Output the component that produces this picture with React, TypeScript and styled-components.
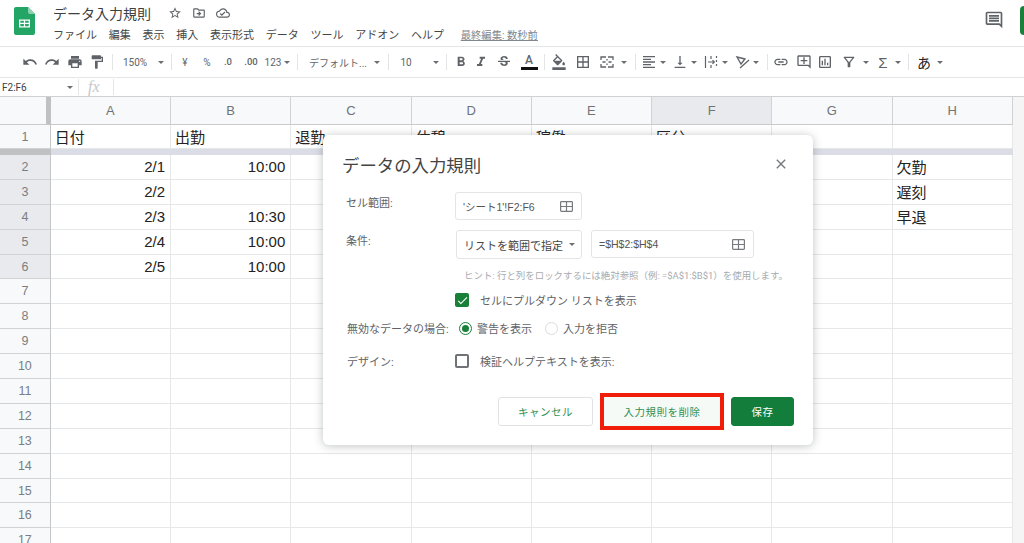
import React from "react";
import styled, { createGlobalStyle } from "styled-components";
import {
  MdUndo,
  MdRedo,
  MdPrint,
  MdFormatPaint,
  MdFormatBold,
  MdFormatItalic,
  MdStrikethroughS,
  MdFormatColorFill,
  MdBorderAll,
  MdFormatAlignLeft,
  MdVerticalAlignBottom,
  MdLink,
  MdOutlineAddComment,
  MdOutlineInsertChart,
  MdOutlineFilterAlt,
  MdOutlineComment,
  MdStarBorder,
  MdOutlineDriveFileMove,
  MdOutlineCloudDone,
  MdCheck,
  MdClose,
} from "react-icons/md";

const UI_FONT = `Roboto, "Noto Sans CJK JP", sans-serif`;
const CELL_FONT = `"Liberation Sans", "Noto Sans CJK JP", sans-serif`;

const GlobalStyle = createGlobalStyle`
  html, body {
    margin: 0;
    padding: 0;
    background: #fff;
    overflow: hidden;
  }
  body {
    font-family: ${UI_FONT};
  }
`;

const Page = styled.div`
  position: relative;
  width: 1024px;
  height: 543px;
  overflow: hidden;
  display: flex;
  flex-direction: column;
  background: #fff;
`;

const Header = styled.header`
  height: 46px;
  flex: none;
  display: flex;
  align-items: flex-start;
  border-bottom: 1px solid #e4e5e7;
  box-sizing: content-box;
`;

const LogoBox = styled.div`
  width: 53px;
  flex: none;
  display: flex;
  justify-content: center;
  padding: 7px 5px 0 0;
  box-sizing: border-box;
`;

const TitleColumn = styled.div`
  display: flex;
  flex-direction: column;
  padding-top: 2px;
`;

const TitleRow = styled.div`
  display: flex;
  align-items: center;
  height: 21px;
`;

const DocTitle = styled.span`
  font-size: 14px;
  color: #3c4043;
  width: 110px;
`;

const TitleIcon = styled.span`
  width: 24px;
  display: flex;
  justify-content: center;
  color: #5f6368;
  font-size: 14px;
`;

const MenuBar = styled.nav`
  display: flex;
  align-items: center;
  gap: 11.75px;
  margin-top: 2px;
  height: 18px;
`;

const MenuItem = styled.span`
  font-size: 11px;
  color: #444746;
`;

const LastEdit = styled.span`
  font-size: 10.3px;
  color: #80868b;
  text-decoration: underline;
  margin-left: 5px;
`;

const HeaderRight = styled.div`
  margin-left: auto;
  display: flex;
  align-items: flex-start;
  gap: 16px;
  padding-top: 6px;
`;

const CommentButton = styled.span`
  display: flex;
  font-size: 20px;
  color: #5f6368;
  margin-top: 4px;
`;

const ShareStub = styled.span`
  width: 4px;
  height: 29px;
  background: #188038;
  border-radius: 4px 0 0 4px;
`;

const Toolbar = styled.div`
  height: 30px;
  flex: none;
  display: flex;
  align-items: center;
  border-bottom: 1px solid #e4e5e7;
`;

const Tool = styled.span<{ $gap: number; $w?: number; $size?: number }>`
  flex: none;
  margin-left: ${(p) => p.$gap}px;
  width: ${(p) => p.$w ?? 16}px;
  display: flex;
  align-items: center;
  justify-content: center;
  color: #5f6368;
  font-size: ${(p) => p.$size ?? 16}px;
  white-space: nowrap;
`;

const ToolText = styled(Tool)`
  font-size: 10px;
  color: #5f6368;
`;

const SigmaTool = styled(Tool)`
  font-family: "Liberation Sans", sans-serif;
  font-size: 15px;
`;

const ImeTool = styled(Tool)`
  font-size: 14px;
  color: #222;
`;

const Caret = styled.span<{ $gap: number }>`
  flex: none;
  margin-left: ${(p) => p.$gap}px;
  width: 8px;
  display: flex;
  justify-content: center;
  &::before {
    content: "";
    border-left: 3px solid transparent;
    border-right: 3px solid transparent;
    border-top: 3px solid #6b6f73;
  }
`;

const ToolSep = styled.span<{ $gap: number }>`
  flex: none;
  margin-left: ${(p) => p.$gap}px;
  width: 1px;
  height: 16px;
  background: #e4e5e7;
`;

const TextColorIcon = styled.span`
  width: 16px;
  display: flex;
  flex-direction: column;
  align-items: center;
  font-size: 12px;
  line-height: 12px;
  font-weight: 500;
  color: #5f6368;
  &::after {
    content: "";
    display: block;
    width: 17px;
    height: 3px;
    background: #111;
    margin-top: 1px;
  }
`;

const DecimalLabel = styled.span`
  font-size: 9.5px;
  font-weight: 500;
  position: relative;
  top: -1px;
`;

const FormulaBar = styled.div`
  height: 18px;
  flex: none;
  display: flex;
  align-items: center;
  border-bottom: 1px solid #cfd1d3;
`;

const NameBox = styled.span`
  width: 64px;
  padding-left: 2px;
  font-size: 10px;
  color: #3c4043;
`;

const FxLabel = styled.span`
  font-family: "Liberation Serif", serif;
  font-style: italic;
  font-size: 16px;
  color: #c6c8ca;
  margin-left: 9px;
  width: 25px;
`;

const Sheet = styled.div`
  flex: 1;
  display: flex;
  flex-direction: column;
  background: #f5f5f6;
`;

const SheetRow = styled.div<{ $height: number }>`
  display: grid;
  grid-template-columns: 50.75px repeat(8, 120.25px);
  height: ${(p) => p.$height}px;
  flex: none;
`;

const ColumnCorner = styled.div`
  background: #f8f9fa;
  border-bottom: 1px solid #c8cacc;
  border-right: 5px solid #bfc1c3;
`;

const ColumnHead = styled.div<{ $active?: boolean }>`
  display: flex;
  align-items: center;
  justify-content: center;
  font-family: ${CELL_FONT};
  font-size: 13px;
  color: #6f7377;
  background: ${(p) => (p.$active ? "#e8eaed" : "#f8f9fa")};
  border-right: 1px solid #d0d2d4;
  border-bottom: 1px solid #c8cacc;
  box-sizing: border-box;
`;

const RowHead = styled.div<{ $active?: boolean }>`
  display: flex;
  align-items: center;
  justify-content: center;
  font-family: ${CELL_FONT};
  font-size: 12.5px;
  color: #7a7e82;
  background: ${(p) => (p.$active ? "#e8eaed" : "#f8f9fa")};
  border-right: 1px solid #c4c6c8;
  border-bottom: 1px solid #d0d2d4;
  box-sizing: border-box;
`;

const Cell = styled.div<{ $right?: boolean }>`
  display: flex;
  align-items: center;
  justify-content: ${(p) => (p.$right ? "flex-end" : "flex-start")};
  padding: 0 ${(p) => (p.$right ? 5 : 4)}px 0 4px;
  font-family: ${CELL_FONT};
  font-size: 15px;
  color: #222;
  background: #fff;
  border-right: 1px solid #e6e7e8;
  border-bottom: 1px solid #e6e7e8;
  box-sizing: border-box;
  overflow: hidden;
  white-space: nowrap;
`;

const FreezeBar = styled.div`
  flex: none;
  height: 6px;
  display: grid;
  grid-template-columns: 50.75px 962px;
`;

const FreezeHead = styled.div`
  background: #bfc1c3;
`;

const FreezeBody = styled.div`
  background: #dadde5;
`;

const Dialog = styled.section`
  position: absolute;
  left: 323px;
  top: 135px;
  width: 490px;
  height: 310px;
  box-sizing: border-box;
  padding: 16px 19px 0;
  background: #fff;
  border-radius: 6px;
  box-shadow: 0 1px 10px rgba(60, 64, 67, 0.32);
  display: flex;
  flex-direction: column;
`;

const DialogHead = styled.div`
  display: flex;
  align-items: center;
  justify-content: space-between;
  height: 26px;
  margin-bottom: 15px;
`;

const DialogTitle = styled.h2`
  margin: 0;
  font-size: 17.4px;
  font-weight: 400;
  color: #444;
`;

const CloseIcon = styled.span`
  display: flex;
  font-size: 16px;
  color: #75787c;
  margin-right: 5px;
`;

const FormRow = styled.div<{ $mb: number }>`
  display: grid;
  grid-template-columns: 113px 1fr;
  margin-bottom: ${(p) => p.$mb}px;
  align-items: flex-start;
`;

const FieldLabel = styled.span<{ $top?: number; $nudge?: number }>`
  font-size: 11px;
  color: #5f6368;
  padding: ${(p) => p.$top ?? 2}px 0 0 ${(p) => p.$nudge ?? 4}px;
  white-space: nowrap;
`;

const Fields = styled.div`
  display: flex;
  align-items: flex-start;
  gap: 9px;
`;

const RangeInput = styled.div<{ $w: number; $h: number }>`
  width: ${(p) => p.$w}px;
  height: ${(p) => p.$h}px;
  box-sizing: border-box;
  border: 1px solid #e3e4e6;
  border-radius: 3px;
  display: flex;
  align-items: center;
  justify-content: space-between;
  padding: 0 8px 0 7px;
  font-family: ${CELL_FONT};
  font-size: 10.5px;
  color: #555;
`;

const SelectBox = styled.div`
  width: 126px;
  height: 29px;
  box-sizing: border-box;
  margin-left: 1px;
  border: 1px solid #e3e4e6;
  border-radius: 3px;
  display: flex;
  align-items: center;
  justify-content: space-between;
  padding: 0 5px 0 7px;
  font-size: 11px;
  color: #444;
  white-space: nowrap;
`;

const Hint = styled.div`
  margin: 9px 0 10px 122px;
  font-size: 9.45px;
  color: #a8abae;
  white-space: nowrap;
`;

const CheckRow = styled.div<{ $mb: number; $indent?: number }>`
  display: flex;
  align-items: center;
  gap: 11px;
  margin-left: ${(p) => p.$indent ?? 0}px;
  margin-bottom: ${(p) => p.$mb}px;
  font-size: 11px;
  color: #5f6368;
  white-space: nowrap;
`;

const CheckBox = styled.span<{ $on?: boolean }>`
  width: 14px;
  height: 14px;
  flex: none;
  box-sizing: border-box;
  border-radius: 2px;
  display: flex;
  align-items: center;
  justify-content: center;
  color: #fff;
  font-size: 13px;
  background: ${(p) => (p.$on ? "#188038" : "#fff")};
  border: ${(p) => (p.$on ? "none" : "2px solid #6f7377")};
`;

const RadioGroup = styled.div`
  display: flex;
  align-items: center;
  font-size: 11px;
  color: #5f6368;
  white-space: nowrap;
`;

const Radio = styled.span<{ $on?: boolean; $gap: number }>`
  width: 13px;
  height: 13px;
  flex: none;
  box-sizing: border-box;
  border-radius: 50%;
  margin-left: ${(p) => p.$gap}px;
  margin-right: 5px;
  border: 1.5px solid ${(p) => (p.$on ? "#188038" : "#dadce0")};
  display: flex;
  align-items: center;
  justify-content: center;
  &::after {
    content: "";
    width: 7px;
    height: 7px;
    border-radius: 50%;
    background: ${(p) => (p.$on ? "#188038" : "transparent")};
  }
`;

const DialogActions = styled.div`
  margin-top: auto;
  margin-bottom: 19px;
  display: flex;
  justify-content: flex-end;
  gap: 11px;
`;

const ActionButton = styled.button<{ $w: number; $primary?: boolean }>`
  width: ${(p) => p.$w}px;
  height: 29px;
  box-sizing: border-box;
  border-radius: 3px;
  font-family: ${UI_FONT};
  font-size: 10.5px;
  font-weight: 400;
  letter-spacing: 0.5px;
  padding: 0;
  color: ${(p) => (p.$primary ? "#fff" : "#2f9155")};
  background: ${(p) => (p.$primary ? "#137e3c" : "#fff")};
  border: 1px solid ${(p) => (p.$primary ? "#137e3c" : "#e0e2e4")};
`;

const DeleteButton = styled(ActionButton)`
  background: #f6faf7;
  border: none;
  border-radius: 0;
  outline: 4px solid #f01d0b;
`;

const WindowIcon = () => (
  <svg width="13" height="11" viewBox="0 0 13 11" fill="none" stroke="#777b7f" strokeWidth="1.2">
    <rect x="0.6" y="0.6" width="11.8" height="9.8" rx="0.8" />
    <path d="M6.5 0.6v9.8M0.6 5.5h11.8" />
  </svg>
);

const SheetsLogo = () => (
  <svg width="21" height="28" viewBox="0 0 21 28">
    <path d="M2 0h12l7 7v19a2 2 0 0 1-2 2H2a2 2 0 0 1-2-2V2a2 2 0 0 1 2-2z" fill="#23a566" />
    <path d="M14 0l7 7h-5a2 2 0 0 1-2-2z" fill="#8ed1b1" />
    <path d="M5 12.5h11v8H5z M6.3 13.8v2h3.6v-2z M11.1 13.8v2h3.6v-2z M6.3 17v2.2h3.6V17z M11.1 17v2.2h3.6V17z" fill="#fff" fillRule="evenodd" />
  </svg>
);

const MergeIcon = () => (
  <svg width="14" height="12" viewBox="0 0 14 12" fill="none" stroke="#5f6368" strokeWidth="1.3">
    <path d="M1 4V1h5M8 1h5v3M1 8v3h5M8 11h5V8M2.5 6h3M8.5 6h3M7 3v1.5M7 7.5V9" />
  </svg>
);

const WrapIcon = () => (
  <svg width="14" height="14" viewBox="0 0 14 14" fill="none" stroke="#5f6368" strokeWidth="1.2">
    <path d="M1.5 1v12M12.5 1v2M12.5 5v2M12.5 9v2M7 1v3M7 10v3M4 7h6M8.5 5.2L10.3 7 8.5 8.8" />
  </svg>
);

const RotateIcon = () => (
  <svg width="16" height="14" viewBox="0 0 16 14" fill="none" stroke="#5f6368" strokeWidth="1.3">
    <path d="M2 2l8 2-4 5zM5 13L14 5" />
  </svg>
);

const columnLetters = ["A", "B", "C", "D", "E", "F", "G", "H"];

const rows: { label: string; cells: Record<number, string> }[] = [
  { label: "2", cells: { 0: "2/1", 1: "10:00", 7: "欠勤" } },
  { label: "3", cells: { 0: "2/2", 7: "遅刻" } },
  { label: "4", cells: { 0: "2/3", 1: "10:30", 7: "早退" } },
  { label: "5", cells: { 0: "2/4", 1: "10:00" } },
  { label: "6", cells: { 0: "2/5", 1: "10:00" } },
  ...Array.from({ length: 11 }, (_, i) => ({ label: String(i + 7), cells: {} })),
];

const headerCells = ["日付", "出勤", "退勤", "休憩", "稼働", "区分", "", ""];

function TopToolbar() {
  return (
    <Toolbar>
      <Tool $gap={22} $size={18}><MdUndo /></Tool>
      <Tool $gap={6} $size={18}><MdRedo /></Tool>
      <Tool $gap={7}><MdPrint /></Tool>
      <Tool $gap={6}><MdFormatPaint /></Tool>
      <ToolSep $gap={7} />
      <ToolText $gap={10} $w={24}>150%</ToolText>
      <Caret $gap={10} />
      <ToolSep $gap={6} />
      <ToolText $gap={7} $w={12}>¥</ToolText>
      <ToolText $gap={10} $w={12}>%</ToolText>
      <Tool $gap={7}><DecimalLabel>.0</DecimalLabel></Tool>
      <Tool $gap={6} $w={18}><DecimalLabel>.00</DecimalLabel></Tool>
      <ToolText $gap={4} $w={18}>123</ToolText>
      <Caret $gap={1} />
      <ToolSep $gap={6} />
      <ToolText $gap={12} $w={56}>デフォルト...</ToolText>
      <Caret $gap={7} />
      <ToolSep $gap={7} />
      <ToolText $gap={11} $w={12}>10</ToolText>
      <Caret $gap={20} />
      <ToolSep $gap={6} />
      <Tool $gap={6} $size={18}><MdFormatBold /></Tool>
      <Tool $gap={4} $size={18}><MdFormatItalic /></Tool>
      <Tool $gap={7}><MdStrikethroughS /></Tool>
      <Tool $gap={9}><TextColorIcon>A</TextColorIcon></Tool>
      <ToolSep $gap={7} />
      <Tool $gap={6}><MdFormatColorFill /></Tool>
      <Tool $gap={8}><MdBorderAll /></Tool>
      <Tool $gap={8}><MergeIcon /></Tool>
      <Caret $gap={5} />
      <ToolSep $gap={7} />
      <Tool $gap={5}><MdFormatAlignLeft /></Tool>
      <Caret $gap={2} />
      <Tool $gap={5}><MdVerticalAlignBottom /></Tool>
      <Caret $gap={2} />
      <Tool $gap={5}><WrapIcon /></Tool>
      <Caret $gap={2} />
      <Tool $gap={6}><RotateIcon /></Tool>
      <Caret $gap={1} />
      <ToolSep $gap={7} />
      <Tool $gap={5} $size={18}><MdLink /></Tool>
      <Tool $gap={7}><MdOutlineAddComment /></Tool>
      <Tool $gap={5}><MdOutlineInsertChart /></Tool>
      <Tool $gap={8}><MdOutlineFilterAlt /></Tool>
      <Caret $gap={5} />
      <SigmaTool $gap={5}>Σ</SigmaTool>
      <Caret $gap={3} />
      <ToolSep $gap={6} />
      <ImeTool $gap={7}>あ</ImeTool>
      <Caret $gap={4} />
    </Toolbar>
  );
}

function ValidationDialog() {
  return (
    <Dialog>
      <DialogHead>
        <DialogTitle>データの入力規則</DialogTitle>
        <CloseIcon><MdClose /></CloseIcon>
      </DialogHead>
      <FormRow $mb={10}>
        <FieldLabel>セル範囲:</FieldLabel>
        <Fields>
          <RangeInput $w={127} $h={28}>
            'シート1'!F2:F6
            <WindowIcon />
          </RangeInput>
        </Fields>
      </FormRow>
      <FormRow $mb={0}>
        <FieldLabel>条件:</FieldLabel>
        <Fields>
          <SelectBox>
            リストを範囲で指定
            <Caret $gap={0} />
          </SelectBox>
          <RangeInput $w={163} $h={28}>
            =$H$2:$H$4
            <WindowIcon />
          </RangeInput>
        </Fields>
      </FormRow>
      <Hint>ヒント: 行と列をロックするには絶対参照（例: =$A$1:$B$1）を使用します。</Hint>
      <CheckRow $mb={12} $indent={113}>
        <CheckBox $on><MdCheck /></CheckBox>
        セルにプルダウン リストを表示
      </CheckRow>
      <FormRow $mb={17}>
        <FieldLabel $top={0} $nudge={5}>無効なデータの場合:</FieldLabel>
        <RadioGroup>
          <Radio $on $gap={4} />
          警告を表示
          <Radio $gap={13} />
          入力を拒否
        </RadioGroup>
      </FormRow>
      <FormRow $mb={0}>
        <FieldLabel $top={0} $nudge={5}>デザイン:</FieldLabel>
        <CheckRow $mb={0}>
          <CheckBox />
          検証ヘルプテキストを表示:
        </CheckRow>
      </FormRow>
      <DialogActions>
        <ActionButton $w={95}>キャンセル</ActionButton>
        <DeleteButton $w={116}>入力規則を削除</DeleteButton>
        <ActionButton $w={63} $primary>保存</ActionButton>
      </DialogActions>
    </Dialog>
  );
}

export default function App() {
  return (
    <Page>
      <GlobalStyle />
      <Header>
        <LogoBox><SheetsLogo /></LogoBox>
        <TitleColumn>
          <TitleRow>
            <DocTitle>データ入力規則</DocTitle>
            <TitleIcon><MdStarBorder /></TitleIcon>
            <TitleIcon><MdOutlineDriveFileMove /></TitleIcon>
            <TitleIcon><MdOutlineCloudDone /></TitleIcon>
          </TitleRow>
          <MenuBar>
            {["ファイル", "編集", "表示", "挿入", "表示形式", "データ", "ツール", "アドオン", "ヘルプ"].map((m) => (
              <MenuItem key={m}>{m}</MenuItem>
            ))}
            <LastEdit>最終編集: 数秒前</LastEdit>
          </MenuBar>
        </TitleColumn>
        <HeaderRight>
          <CommentButton><MdOutlineComment /></CommentButton>
          <ShareStub />
        </HeaderRight>
      </Header>
      <TopToolbar />
      <FormulaBar>
        <NameBox>F2:F6</NameBox>
        <Caret $gap={0} />
        <ToolSep $gap={4} />
        <FxLabel>fx</FxLabel>
        <ToolSep $gap={0} />
      </FormulaBar>
      <Sheet>
        <SheetRow $height={28}>
          <ColumnCorner />
          {columnLetters.map((c) => (
            <ColumnHead key={c} $active={c === "F"}>{c}</ColumnHead>
          ))}
        </SheetRow>
        <SheetRow $height={24}>
          <RowHead>1</RowHead>
          {headerCells.map((text, i) => (
            <Cell key={i}>{text}</Cell>
          ))}
        </SheetRow>
        <FreezeBar>
          <FreezeHead />
          <FreezeBody />
        </FreezeBar>
        {rows.map((row, r) => (
          <SheetRow key={row.label} $height={24.9}>
            <RowHead $active={r < 5}>{row.label}</RowHead>
            {columnLetters.map((_, i) => (
              <Cell key={i} $right={i < 2}>{row.cells[i] ?? ""}</Cell>
            ))}
          </SheetRow>
        ))}
      </Sheet>
      <ValidationDialog />
    </Page>
  );
}
